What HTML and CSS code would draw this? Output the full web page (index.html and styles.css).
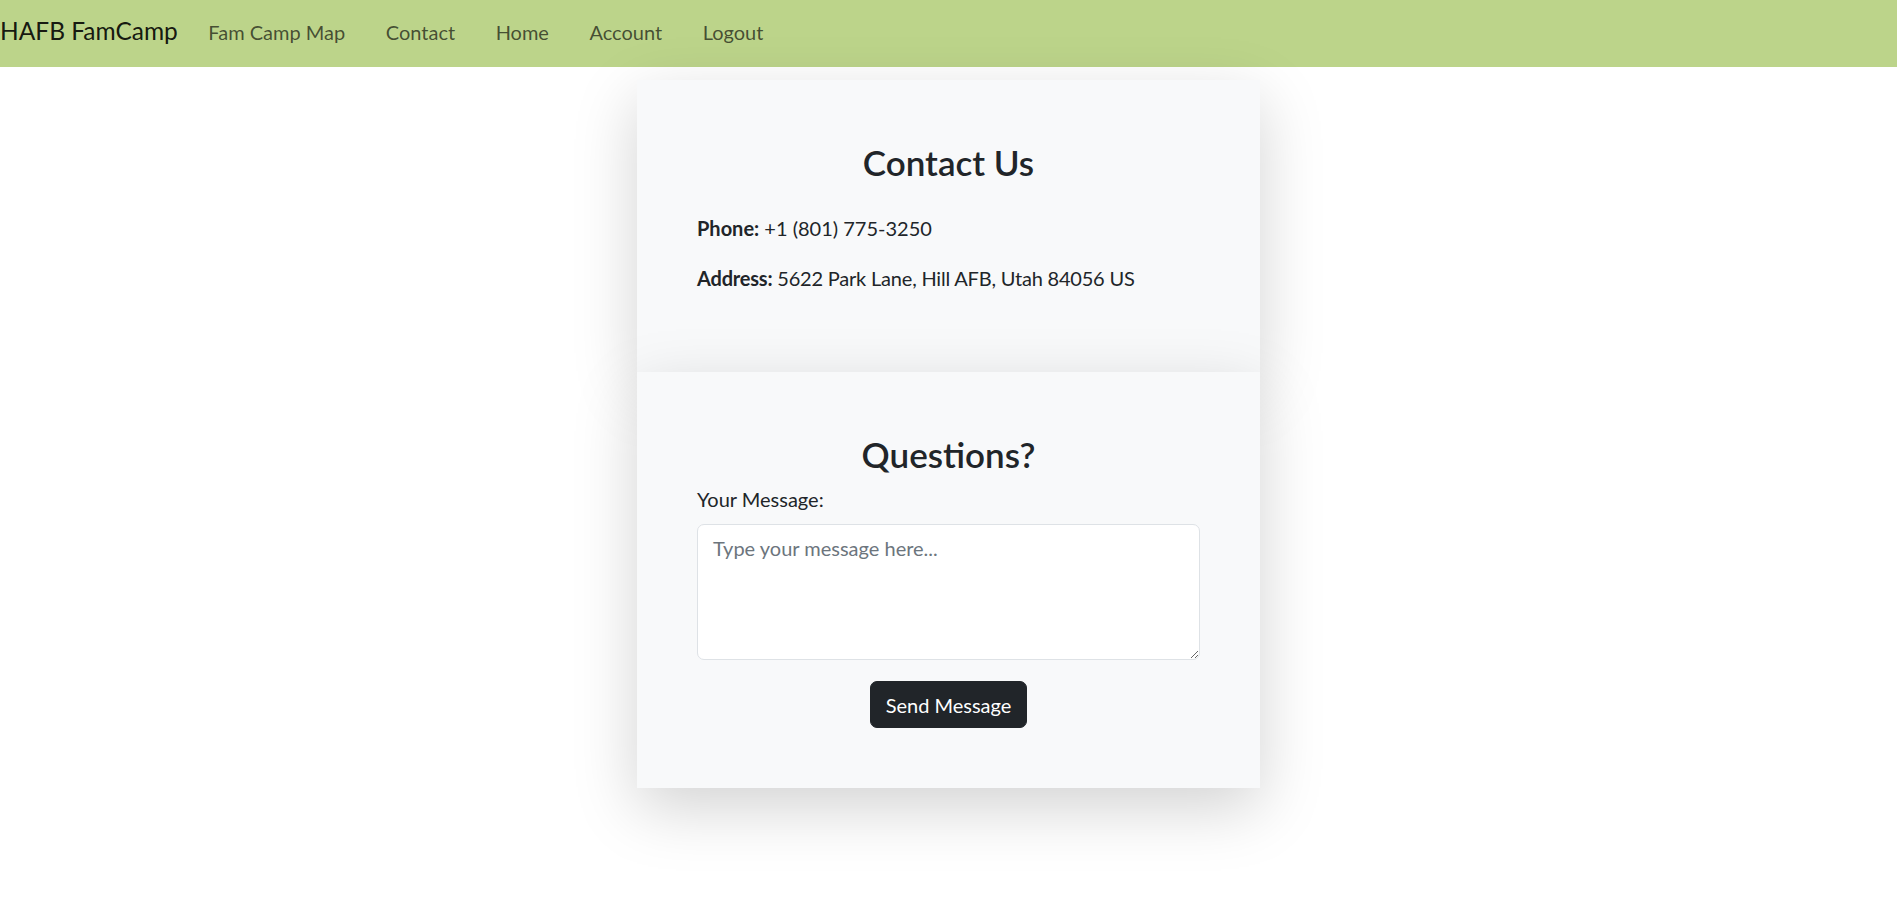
FILE: index.html
```html
<!DOCTYPE html>
<html lang="en">
<head>
<meta charset="utf-8">
<title>Contact - HAFB FamCamp</title>
<link rel="stylesheet" href="styles.css">
</head>
<body>
<nav class="navbar">
  <a class="brand" href="#">HAFB FamCamp</a>
  <ul class="nav-links">
    <li><a href="#">Fam Camp Map</a></li>
    <li><a href="#">Contact</a></li>
    <li><a href="#">Home</a></li>
    <li><a href="#">Account</a></li>
    <li><a href="#">Logout</a></li>
  </ul>
</nav>

<main class="card">
  <section class="panel">
    <h2 class="panel-title panel-title-contact">Contact Us</h2>
    <p class="info"><strong>Phone:</strong> +1 (801) 775-3250</p>
    <p class="info info-address"><strong>Address:</strong> 5622 Park Lane, Hill AFB, Utah 84056 US</p>
  </section>
  <section class="panel">
    <h2 class="panel-title">Questions?</h2>
    <form class="msg-form">
      <label class="msg-label" for="message">Your Message:</label>
      <textarea class="msg-input" id="message" placeholder="Type your message here..."></textarea>
      <div class="actions">
        <button type="button" class="btn-dark">Send Message</button>
      </div>
    </form>
  </section>
</main>
</body>
</html>
```
FILE: styles.css
```css
* { box-sizing: border-box; }

html { font-size: 20px; }

body {
  margin: 0;
  min-height: 100vh;
  font-family: "Lato", "Noto Sans", sans-serif;
  font-size: 20px;
  line-height: 1.5;
  color: #212529;
  background: #ffffff;
}

.navbar {
  display: flex;
  align-items: baseline;
  height: 67px;
  padding-top: 13px;
  background: #bcd48a;
}

.brand {
  font-size: 24.5px;
  line-height: 36px;
  color: rgba(0, 0, 0, 0.9);
  text-decoration: none;
  margin-right: 30.5px;
}

.nav-links {
  display: flex;
  gap: 40.5px;
  list-style: none;
  margin: 0;
  padding: 0;
}

.nav-links a {
  font-size: 20px;
  line-height: 30px;
  color: rgba(0, 0, 0, 0.65);
  text-decoration: none;
}

.card {
  width: 623px;
  margin: 13px auto 0;
}

.panel {
  background: #f8f9fa;
  padding: 61px 60px 60px;
  box-shadow: 0 20px 60px rgba(0, 0, 0, 0.175);
}

.panel:first-child { padding-top: 61px; padding-bottom: 59px; }

.panel-title {
  margin: 0 0 9px;
  font-size: 35px;
  line-height: 42px;
  font-weight: 600;
  text-align: center;
}

.panel-title-contact { margin-bottom: 30px; }

.info {
  margin: 0 0 20px;
}

.info-address { letter-spacing: -0.2px; }

.info strong { font-weight: 700; }

.msg-form { margin: 0; }

.msg-label {
  display: block;
  margin-bottom: 10px;
}

.msg-input {
  display: block;
  width: 100%;
  height: 136px;
  margin: 0 0 21px;
  padding: 7.5px 15px;
  font-family: inherit;
  font-size: 20px;
  line-height: 1.5;
  color: #212529;
  background: #ffffff;
  border: 1px solid #dee2e6;
  border-radius: 7px;
  resize: vertical;
}

.msg-input::placeholder { color: #6c757d; opacity: 1; }

.actions {
  display: flex;
  justify-content: center;
}

.btn-dark {
  font-family: inherit;
  font-size: 20px;
  line-height: 30px;
  padding: 7.5px 15px;
  color: #ffffff;
  background: #212529;
  border: 1px solid #212529;
  border-radius: 7px;
  cursor: pointer;
}
```
